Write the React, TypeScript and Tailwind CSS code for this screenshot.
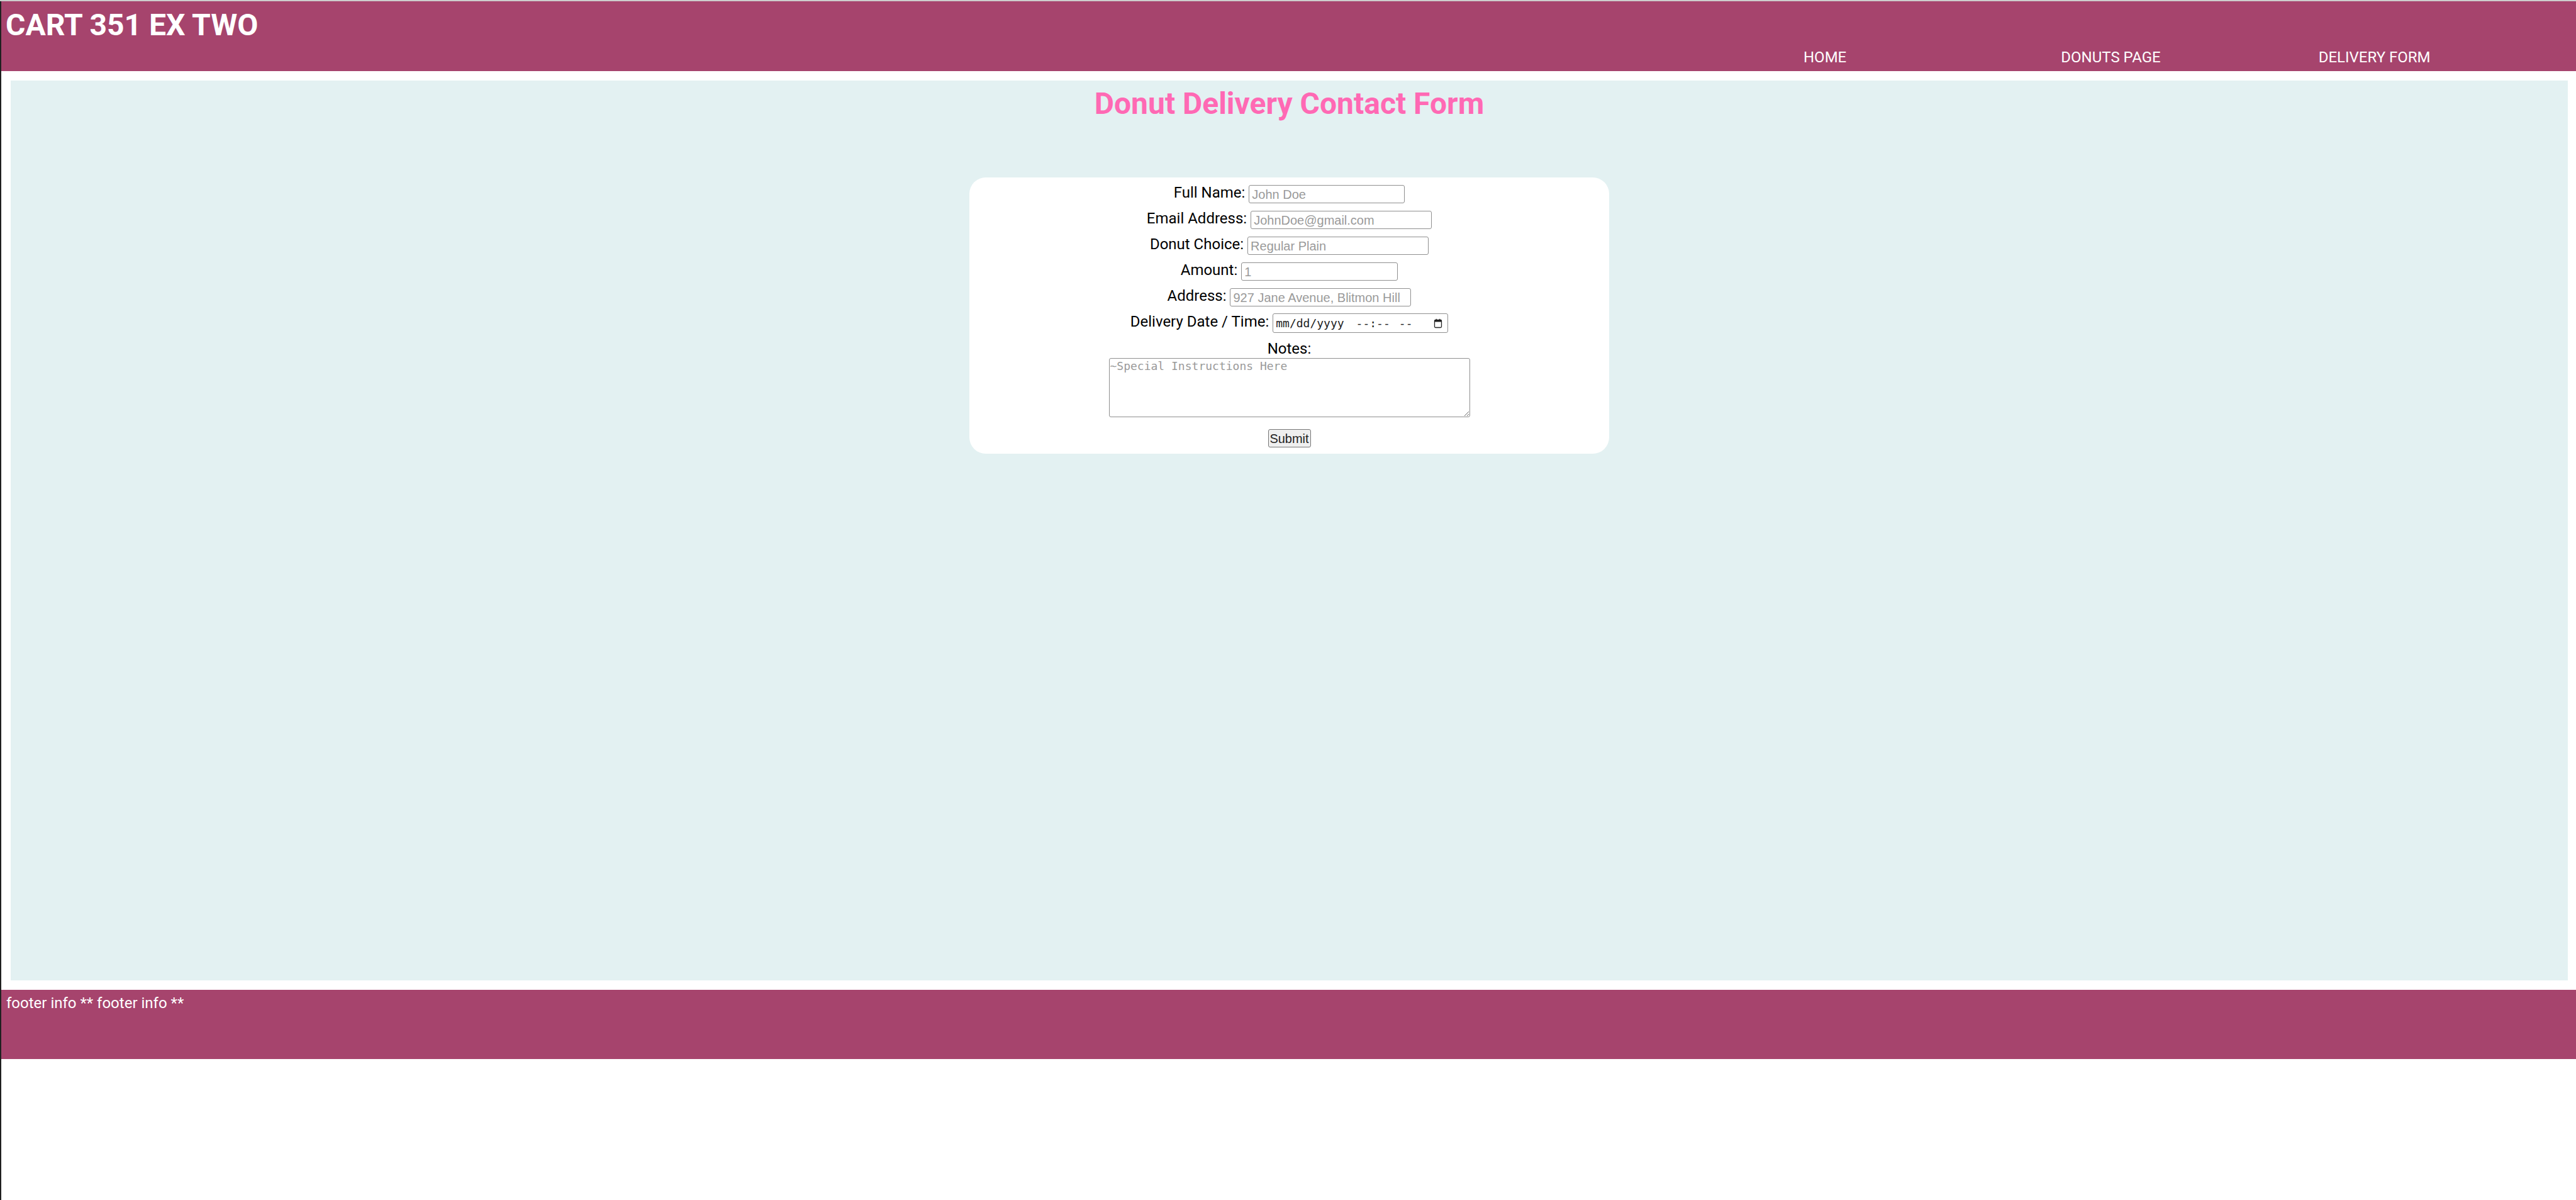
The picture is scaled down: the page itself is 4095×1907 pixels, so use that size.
import React from "react";

const inputCls =
  "h-[29px] px-[4px] text-[20px] font-['Liberation_Sans',Arial,sans-serif] text-[#222] bg-white border border-[#8f8f8f] rounded-[3px] placeholder:text-[#9a9a9a] outline-none";

function Row({ label, children }: { label: string; children: React.ReactNode }) {
  return (
    <div className="h-[41px] flex items-center justify-center gap-[6px]">
      <label className="mb-[5px] text-[24px] leading-[28px] text-black">{label}</label>
      {children}
    </div>
  );
}

function CalendarIcon() {
  return (
    <svg width="16" height="16" viewBox="0 0 16 16" className="shrink-0">
      <rect x="2.5" y="2.5" width="11" height="12" rx="1.5" fill="none" stroke="#222" strokeWidth="1.3" />
      <rect x="2.5" y="2.5" width="11" height="3" fill="#222" />
      <rect x="4.6" y="0.8" width="1.4" height="2.5" fill="#222" />
      <rect x="10" y="0.8" width="1.4" height="2.5" fill="#222" />
    </svg>
  );
}

export default function App() {
  return (
    <div className="h-[1907px] flex flex-col bg-white font-[Roboto,sans-serif]">
      <div className="h-[2px] w-full bg-[#cdcdcd]" />
      <div className="flex-1 flex flex-row">
        <div className="w-[2px] bg-[#202020]" />
        <div className="flex-1 flex flex-col">
          <header className="h-[111px] bg-[#a6446d] pl-[7px] pt-[10px] flex flex-col">
            <h1 className="text-[48px] leading-[56px] font-bold text-white">CART 351 EX TWO</h1>
            <nav className="mt-[9px] ml-auto w-[1228px] flex">
              <a className="flex-1 text-[24px] leading-[28px] text-white">HOME</a>
              <a className="flex-1 text-[24px] leading-[28px] text-white">DONUTS PAGE</a>
              <a className="flex-1 text-[24px] leading-[28px] text-white">DELIVERY FORM</a>
            </nav>
          </header>

          <main className="mt-[15px] ml-[15px] mr-[13px] h-[1430px] bg-[#e3f1f2] pt-[9px]">
            <h2 className="text-center text-[48px] leading-[56px] font-bold text-[#ff69b4]">
              Donut Delivery Contact Form
            </h2>
            <form
              className="mt-[89px] mx-auto w-[1017px] bg-white rounded-[26px] pt-[6px] pb-[10px] flex flex-col items-center"
              onSubmit={(e) => e.preventDefault()}
            >
              <div className="w-full">
                <Row label="Full Name:">
                  <input type="text" placeholder="John Doe" className={`${inputCls} w-[248px]`} />
                </Row>
                <Row label="Email Address:">
                  <input type="email" placeholder="JohnDoe@gmail.com" className={`${inputCls} w-[288px]`} />
                </Row>
                <Row label="Donut Choice:">
                  <input type="text" placeholder="Regular Plain" className={`${inputCls} w-[288px]`} />
                </Row>
                <Row label="Amount:">
                  <input type="text" placeholder="1" className={`${inputCls} w-[249px]`} />
                </Row>
                <Row label="Address:">
                  <input
                    type="text"
                    placeholder="927 Jane Avenue, Blitmon Hill"
                    className={`${inputCls} w-[288px]`}
                  />
                </Row>
                <Row label="Delivery Date / Time:">
                  <div
                    role="textbox"
                    aria-label="Delivery Date / Time"
                    className="h-[31px] w-[279px] pl-[4px] pr-[7px] flex items-center text-[18px] font-['DejaVu_Sans_Mono',monospace] text-[#222] bg-white border border-[#8f8f8f] rounded-[3px]"
                  >
                    <span>mm/dd/yyyy</span>
                    <span className="ml-[19px]">--:--</span>
                    <span className="ml-[14px]">--</span>
                    <span className="ml-auto flex items-center">
                      <CalendarIcon />
                    </span>
                  </div>
                </Row>
              </div>
              <label className="mt-[6px] text-[24px] leading-[28px] text-black">Notes:</label>
              <textarea
                placeholder="~Special Instructions Here"
                className="mt-[1px] block w-[574px] h-[94px] p-[1px] text-[18px] leading-[22px] font-['DejaVu_Sans_Mono',monospace] text-[#222] border border-[#8f8f8f] rounded-[3px] placeholder:text-[#9a9a9a] outline-none"
              />
              <button
                type="submit"
                className="mt-[19px] w-[68px] h-[29px] text-[20px] leading-[22px] font-['Liberation_Sans',Arial,sans-serif] text-[#222] bg-[#efefef] border border-[#767676] rounded-[3px]"
              >
                Submit
              </button>
            </form>
          </main>

          <footer className="mt-[15px] h-[110px] bg-[#a6446d] pl-[8px] pt-[7px]">
            <p className="text-[24px] leading-[28px] text-white">footer info ** footer info **</p>
          </footer>
        </div>
      </div>
    </div>
  );
}
